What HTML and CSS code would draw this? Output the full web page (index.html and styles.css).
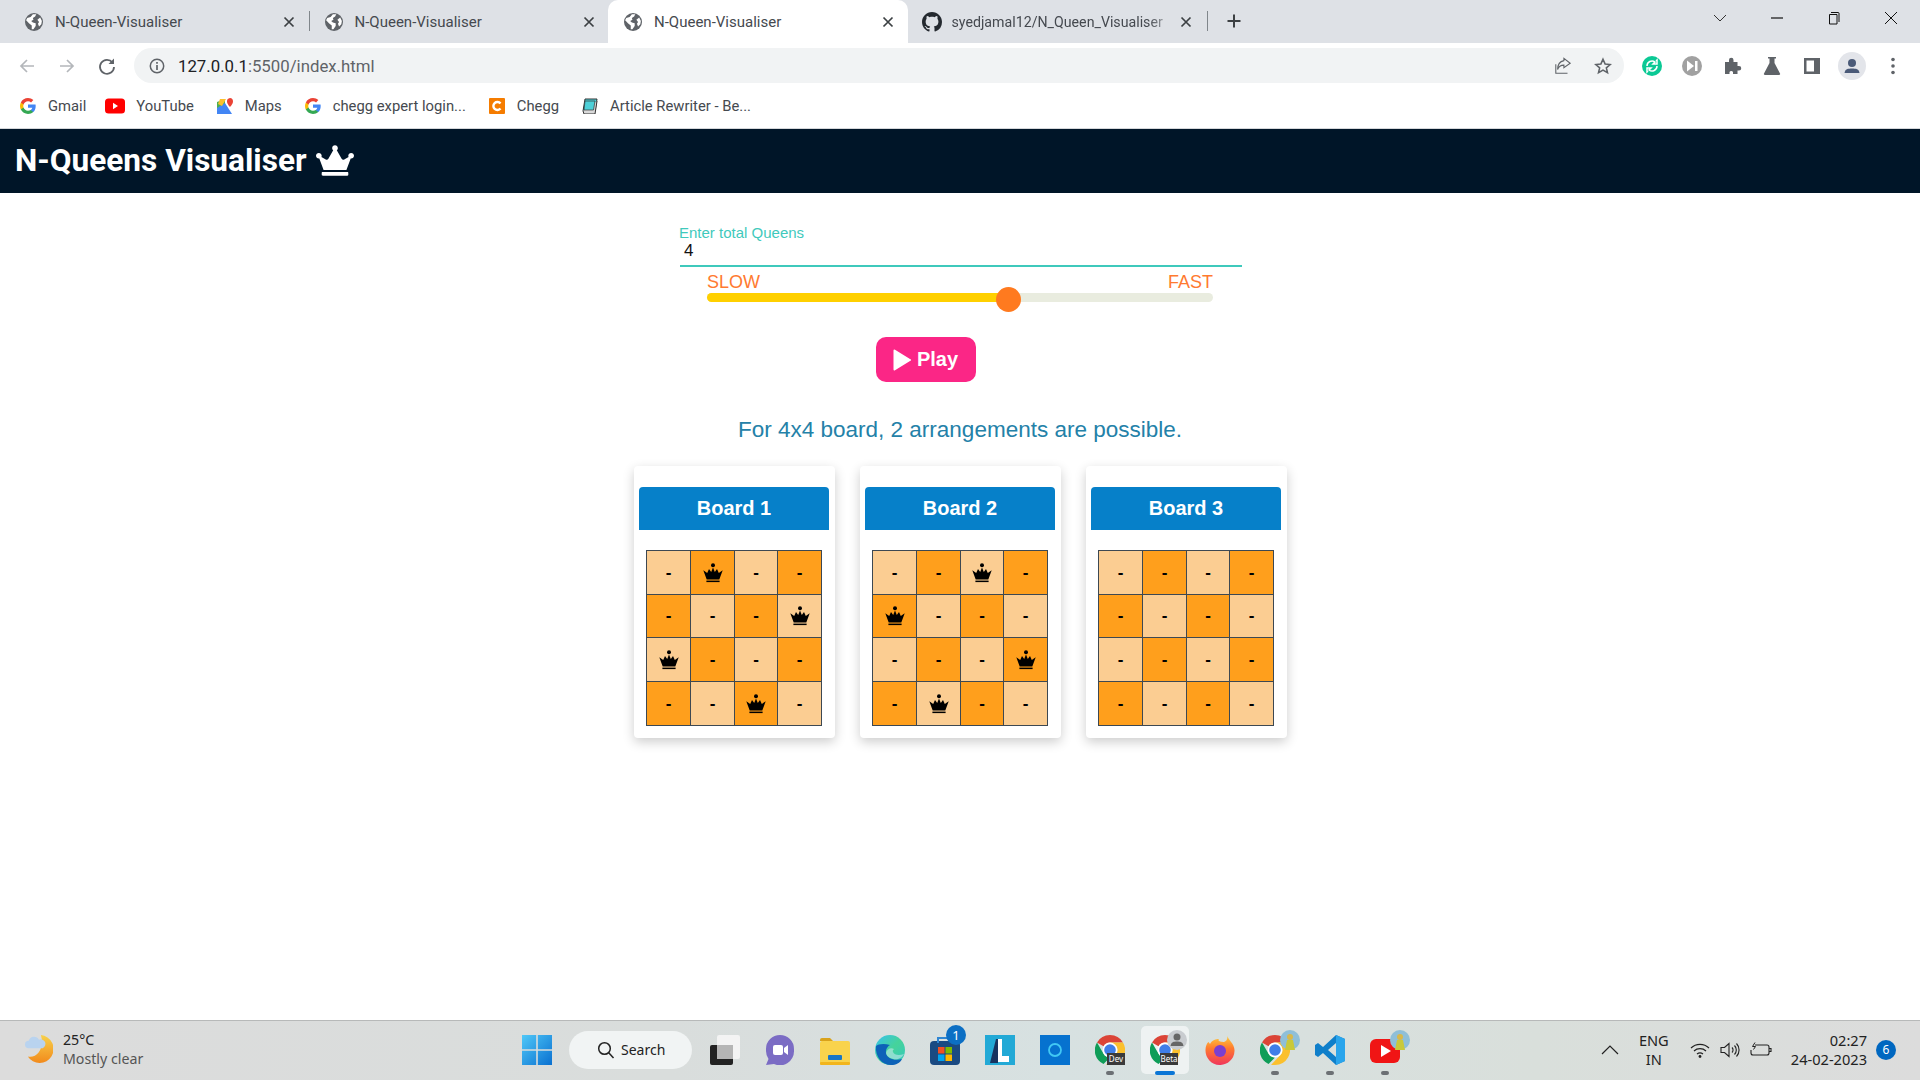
FILE: index.html
```html
<!DOCTYPE html>
<html lang="en">
<head>
<meta charset="utf-8">
<title>N-Queen-Visualiser</title>
<link rel="stylesheet" href="styles.css">
</head>
<body>
<svg class="defs" aria-hidden="true">
  <symbol id="globe" viewBox="0 0 16 16"><circle cx="8" cy="8" r="8" fill="#5f6368"/><path d="M2 4.5 5 3.5 7 1 10 1 9 3 7 4.5 7.5 6 5.5 7 7 8.5 9.5 9 9.5 11.5 7.5 14.5 6 14.5 6 11 3.5 9 1 6.5ZM11 6 13.5 4 15 7 14.5 10 12.5 12 11.5 9.5 12.5 8Z" fill="#fff"/></symbol>
  <symbol id="close" viewBox="0 0 12 12"><path d="M1.5 1.5 10.5 10.5M10.5 1.5 1.5 10.5" stroke="#3c4043" stroke-width="1.7" fill="none"/></symbol>
  <symbol id="gg" viewBox="0 0 18 18"><path d="M17.64 9.2c0-.637-.057-1.251-.164-1.84H9v3.481h4.844c-.209 1.125-.843 2.078-1.796 2.717v2.258h2.908c1.702-1.567 2.684-3.874 2.684-6.615z" fill="#4285F4"/><path d="M9 18c2.43 0 4.467-.806 5.956-2.18l-2.908-2.259c-.806.54-1.837.86-3.048.86-2.344 0-4.328-1.584-5.036-3.711H.957v2.332C2.438 15.983 5.482 18 9 18z" fill="#34A853"/><path d="M3.964 10.71c-.18-.54-.282-1.117-.282-1.71s.102-1.17.282-1.71V4.958H.957C.347 6.173 0 7.548 0 9s.348 2.827.957 4.042l3.007-2.332z" fill="#FBBC05"/><path d="M9 3.58c1.321 0 2.508.454 3.44 1.345l2.582-2.58C13.463.891 11.426 0 9 0 5.482 0 2.438 2.017.957 4.958L3.964 7.29C4.672 5.163 6.656 3.58 9 3.58z" fill="#EA4335"/></symbol>
  <symbol id="queen" viewBox="0 0 20 20"><circle cx="10" cy="2.3" r="2"/><path d="M.3 7.2 3.7 16.5H16.3L19.7 7.2 15.8 10 14 6 11.8 9 10 4.5 8.2 9 6 6 4.2 10Z"/><rect x="3.4" y="17.6" width="13.2" height="1.5"/></symbol>
  <symbol id="crown" viewBox="0 0 640 512"><path d="M528 448H112c-8.8 0-16 7.2-16 16v32c0 8.8 7.2 16 16 16h416c8.800 0 16-7.200 16-16v-32c0-8.800-7.200-16-16-16zm64-320c-26.500 0-48 21.500-48 48 0 7.100 1.600 13.700 4.400 19.800L476 239.200c-15.400 9.200-35.300 4-44.200-11.600L350.300 85C361 76.200 368 63 368 48c0-26.500-21.500-48-48-48s-48 21.500-48 48c0 15 7 28.200 17.700 37l-81.500 142.600c-8.900 15.600-28.900 20.800-44.200 11.600l-72.300-43.400c2.700-6 4.400-12.700 4.400-19.800 0-26.500-21.500-48-48-48S0 149.500 0 176s21.500 48 48 48c2.600 0 5.200-.4 7.700-.8L128 416h384l72.300-192.800c2.500.4 5.100.8 7.700.8 26.500 0 48-21.500 48-48s-21.500-48-48-48z" fill="#fff"/></symbol>
  <symbol id="chrome" viewBox="0 0 30 30"><path d="M15 0A15 15 0 0 1 28 7.500H15A7.500 7.500 0 0 0 8.500 11.250L2 7.500A15 15 0 0 1 15 0Z" fill="#db4437"/><path d="M2 7.500 8.500 18.750A7.500 7.500 0 0 0 15 22.500L8.500 29A15 15 0 0 1 2 7.500Z" fill="#0f9d58"/><path d="M28 7.500A15 15 0 0 1 15 30H11L21.500 18.750A7.500 7.500 0 0 0 21.500 11.250L15 7.500Z" fill="#fbc02d"/><circle cx="15" cy="15" r="7.400" fill="#fff"/><circle cx="15" cy="15" r="5.800" fill="#3f7ee8"/></symbol>
</svg>

<div class="tabstrip">
  <div class="tab tab-sep"><svg class="favicon"><use href="#globe"/></svg><span class="tab-title">N-Queen-Visualiser</span><svg class="tab-x"><use href="#close"/></svg></div>
  <div class="tab"><svg class="favicon"><use href="#globe"/></svg><span class="tab-title">N-Queen-Visualiser</span><svg class="tab-x"><use href="#close"/></svg></div>
  <div class="tab tab-active"><svg class="favicon"><use href="#globe"/></svg><span class="tab-title">N-Queen-Visualiser</span><svg class="tab-x"><use href="#close"/></svg></div>
  <div class="tab tab-sep"><svg class="favicon favicon-gh" viewBox="0 0 16 16"><path fill="#24292f" d="M8 0C3.580 0 0 3.580 0 8c0 3.540 2.290 6.530 5.470 7.590.4.070.55-.17.55-.38 0-.19-.01-.82-.01-1.490-2.010.37-2.530-.49-2.690-.94-.09-.23-.48-.94-.82-1.130-.28-.15-.68-.52-.01-.53.63-.01 1.080.58 1.230.82.72 1.210 1.870.87 2.330.66.070-.52.28-.87.51-1.070-1.780-.2-3.640-.89-3.640-3.950 0-.87.31-1.590.82-2.150-.08-.2-.36-1.020.08-2.120 0 0 .67-.21 2.200.82.64-.18 1.320-.27 2-.27.68 0 1.360.09 2 .27 1.530-1.040 2.200-.82 2.200-.82.44 1.100.16 1.920.08 2.120.51.56.82 1.270.82 2.150 0 3.070-1.870 3.750-3.650 3.950.29.25.54.73.54 1.480 0 1.070-.01 1.930-.01 2.200 0 .21.15.46.55.38A8.013 8.013 0 0016 8c0-4.420-3.580-8-8-8z"/></svg><span class="tab-title tab-fade">syedjamal12/N_Queen_Visualiser</span><svg class="tab-x"><use href="#close"/></svg></div>
  <svg class="newtab" viewBox="0 0 16 16"><path d="M8 1.500V14.500M1.500 8H14.500" stroke="#3c4043" stroke-width="2" fill="none"/></svg>
  <div class="winctl">
    <svg class="wc" viewBox="0 0 16 16"><path d="M2 5 8 11 14 5" stroke="#333" fill="none"/></svg>
    <svg class="wc" viewBox="0 0 16 16"><path d="M2 8H14" stroke="#111" stroke-width="1.200" fill="none"/></svg>
    <svg class="wc" viewBox="0 0 16 16"><path d="M3.500 4.500H11V14H3.500ZM5 2.500H12.500A1 1 0 0 1 13 3V12" stroke="#111" fill="none"/></svg>
    <svg class="wc" viewBox="0 0 16 16"><path d="M2 2 14 14M14 2 2 14" stroke="#111" fill="none"/></svg>
  </div>
</div>

<div class="toolbar">
  <svg class="tool" viewBox="0 0 20 20"><path d="M17 10H4M10 4 4 10 10 16" stroke="#b4b7bb" stroke-width="1.700" fill="none"/></svg>
  <svg class="tool" viewBox="0 0 20 20"><path d="M3 10H16M10 4 16 10 10 16" stroke="#b4b7bb" stroke-width="1.700" fill="none"/></svg>
  <svg class="tool" viewBox="0 0 20 20"><path d="M15.500 6.500A7 7 0 1 0 17 11" stroke="#5f6368" stroke-width="1.800" fill="none"/><path d="M17 2.500V8H11.500Z" fill="#5f6368"/></svg>
  <div class="omnibox">
    <svg class="info" viewBox="0 0 16 16"><circle cx="8" cy="8" r="6.700" fill="none" stroke="#5f6368" stroke-width="1.500"/><path d="M8 7V12M8 4V5.700" stroke="#5f6368" stroke-width="1.700"/></svg>
    <span class="url"><span class="url-host">127.0.0.1</span>:5500/index.html</span>
    <svg class="omni-act" viewBox="0 0 20 20"><path d="M11 4V1.500L18 7 11 12V9C7 9 5 11 4 14 4 9 6 5 11 4ZM2 8V18H15" stroke="#5f6368" stroke-width="1.200" fill="none"/></svg>
    <svg class="omni-act" viewBox="0 0 20 20"><path d="M10 2.500 12.300 7.700 18 8.300 13.700 12 15 17.500 10 14.600 5 17.500 6.300 12 2 8.300 7.700 7.700Z" stroke="#5f6368" stroke-width="1.700" fill="none"/></svg>
  </div>
  <div class="ext-row">
    <svg class="tool" viewBox="0 0 20 20"><circle cx="10" cy="10" r="10" fill="#0bc995"/><path d="M5 10A5 5 0 0 1 13 6L11 8H15V4L14 5M15 10A5 5 0 0 1 7 14L9 12H5V16L6 15" stroke="#fff" stroke-width="1.500" fill="none"/></svg>
    <svg class="tool" viewBox="0 0 20 20"><circle cx="10" cy="10" r="10" fill="#a1a1a1"/><path d="M5 4.500 12 10 5 15.500Z" fill="#fff"/><rect x="13" y="5" width="2.500" height="10" fill="#fff"/></svg>
    <svg class="tool" viewBox="0 0 20 20"><path d="M3 6H7V4A2.200 2.200 0 0 1 11.500 4V6H15.500V10H17A2.200 2.200 0 0 1 17 14.500H15.500V18H11V16A2 2 0 0 0 7.500 16V18H3Z" fill="#5f6368"/></svg>
    <svg class="tool" viewBox="0 0 20 20"><path d="M6 1H14V2.500H12.500V7L18 17.500A1 1 0 0 1 17 19H3A1 1 0 0 1 2 17.500L7.500 7V2.500H6Z" fill="#5f6368"/></svg>
    <svg class="tool" viewBox="0 0 20 20"><path d="M2 2H18V18H2ZM4.500 4.500V15.500H12V4.500Z" fill="#5f6368" fill-rule="evenodd"/></svg>
    <svg class="tool tool-avatar" viewBox="0 0 28 28"><circle cx="14" cy="14" r="14" fill="#e3e5ea"/><circle cx="14" cy="11" r="4" fill="#4a5a78"/><path d="M6.500 21C7 17 10 16.500 14 16.500S21 17 21.500 21Z" fill="#4a5a78"/></svg>
    <svg class="tool" viewBox="0 0 20 20"><circle cx="10" cy="3.500" r="1.800" fill="#5f6368"/><circle cx="10" cy="10" r="1.800" fill="#5f6368"/><circle cx="10" cy="16.500" r="1.800" fill="#5f6368"/></svg>
  </div>
</div>

<div class="bookmarks">
  <div class="bm"><svg class="bm-ico"><use href="#gg"/></svg><span>Gmail</span></div>
  <div class="bm bm-tube"><svg class="bm-ico bm-yt" viewBox="0 0 20 16"><rect width="20" height="15" y=".5" rx="3.500" fill="#f00"/><path d="M8 4.700 13 8 8 11.300Z" fill="#fff"/></svg><span>YouTube</span></div>
  <div class="bm"><svg class="bm-ico" viewBox="0 0 16 16"><path d="M0 4 8 1V15L0 16Z" fill="#4caf50"/><path d="M0 10 8 5 15 16H0Z" fill="#4285f4"/><path d="M3 1 9 1 5 8 1 6Z" fill="#fbc02d"/><path d="M13 0A3.500 3.500 0 0 1 16 3.500C16 6 13 9 13 9S10 6 10 3.500A3.500 3.500 0 0 1 13 0Z" fill="#ea4335"/></svg><span>Maps</span></div>
  <div class="bm"><svg class="bm-ico"><use href="#gg"/></svg><span>chegg expert login...</span></div>
  <div class="bm"><svg class="bm-ico" viewBox="0 0 16 16"><rect width="16" height="16" rx="1" fill="#f57c00"/><path d="M11.500 5.500A4 4 0 1 0 11.500 10.500" stroke="#fff" stroke-width="2.400" fill="none"/></svg><span>Chegg</span></div>
  <div class="bm"><svg class="bm-ico" viewBox="0 0 16 16"><path d="M3 1H15L13 13H1Z" fill="#4dd0d8" stroke="#333"/><path d="M1 13 2 16H13L15 3" stroke="#333" fill="#d9d9d9"/><path d="M3 3H13L11.500 12H2Z" fill="#4dd0d8" stroke="#333" stroke-width=".7"/></svg><span>Article Rewriter - Be...</span></div>
</div>

<header class="app-header">
  <h1 class="app-title">N-Queens Visualiser</h1>
  <svg class="app-crown"><use href="#crown"/></svg>
</header>

<main class="page">
  <section class="controls">
    <label class="field-label">Enter total Queens</label>
    <div class="field-value">4</div>
    <div class="speed">
      <div class="speed-labels"><span>SLOW</span><span>FAST</span></div>
      <div class="slider"><div class="slider-fill"></div><div class="slider-thumb"></div></div>
    </div>
    <button class="play"><svg class="play-ico" viewBox="0 0 18 22"><path d="M1 1.500V20.500A1 1 0 0 0 2.500 21.300L17.500 12A1 1 0 0 0 17.500 10L2.500.7A1 1 0 0 0 1 1.500Z" fill="#fff"/></svg>Play</button>
  </section>
  <p class="result">For 4x4 board, 2 arrangements are possible.</p>
  <section class="boards">
    <article class="card">
      <h2 class="card-title">Board 1</h2>
      <div class="grid">
        <div class="c l">-</div><div class="c d"><svg class="q"><use href="#queen"/></svg></div><div class="c l">-</div><div class="c d">-</div>
        <div class="c d">-</div><div class="c l">-</div><div class="c d">-</div><div class="c l"><svg class="q"><use href="#queen"/></svg></div>
        <div class="c l"><svg class="q"><use href="#queen"/></svg></div><div class="c d">-</div><div class="c l">-</div><div class="c d">-</div>
        <div class="c d">-</div><div class="c l">-</div><div class="c d"><svg class="q"><use href="#queen"/></svg></div><div class="c l">-</div>
      </div>
    </article>
    <article class="card">
      <h2 class="card-title">Board 2</h2>
      <div class="grid">
        <div class="c l">-</div><div class="c d">-</div><div class="c l"><svg class="q"><use href="#queen"/></svg></div><div class="c d">-</div>
        <div class="c d"><svg class="q"><use href="#queen"/></svg></div><div class="c l">-</div><div class="c d">-</div><div class="c l">-</div>
        <div class="c l">-</div><div class="c d">-</div><div class="c l">-</div><div class="c d"><svg class="q"><use href="#queen"/></svg></div>
        <div class="c d">-</div><div class="c l"><svg class="q"><use href="#queen"/></svg></div><div class="c d">-</div><div class="c l">-</div>
      </div>
    </article>
    <article class="card">
      <h2 class="card-title">Board 3</h2>
      <div class="grid">
        <div class="c l">-</div><div class="c d">-</div><div class="c l">-</div><div class="c d">-</div>
        <div class="c d">-</div><div class="c l">-</div><div class="c d">-</div><div class="c l">-</div>
        <div class="c l">-</div><div class="c d">-</div><div class="c l">-</div><div class="c d">-</div>
        <div class="c d">-</div><div class="c l">-</div><div class="c d">-</div><div class="c l">-</div>
      </div>
    </article>
  </section>
</main>

<footer class="taskbar">
  <div class="weather">
    <svg class="weather-ico" viewBox="0 0 30 34"><defs><linearGradient id="moon" x1="0" y1="0" x2="0" y2="1"><stop offset="0" stop-color="#f7d14b"/><stop offset="1" stop-color="#f28a1c"/></linearGradient></defs><path d="M17 1A15 15 0 1 1 3 24C14 26 21 14 17 1Z" fill="url(#moon)"/><path d="M4 15A4 4 0 0 1 4 7 6 6 0 0 1 15 6 4.500 4.500 0 0 1 19 15Z" fill="#b9d3ef"/></svg>
    <div class="weather-text"><div class="w-temp">25°C</div><div class="w-sky">Mostly clear</div></div>
  </div>
  <svg class="win" viewBox="0 0 30 30"><defs><linearGradient id="wg" x1="0" y1="0" x2="1" y2="1"><stop offset="0" stop-color="#4fc8f8"/><stop offset="1" stop-color="#0a70d0"/></linearGradient></defs><path d="M0 0H14.200V14.200H0ZM15.800 0H30V14.200H15.800ZM0 15.800H14.200V30H0ZM15.800 15.800H30V30H15.800Z" fill="url(#wg)"/></svg>
  <div class="search"><svg class="search-ico" viewBox="0 0 18 18"><circle cx="7.500" cy="7.500" r="5.800" fill="none" stroke="#222" stroke-width="1.500"/><path d="M11.500 11.500 16.500 17" stroke="#222" stroke-width="1.500"/></svg><span>Search</span></div>
  <div class="apps">
    <div class="app"><svg class="app-ico" viewBox="0 0 30 30"><rect x="0" y="10" width="23" height="20" rx="2" fill="#222"/><rect x="7" y="0" width="23" height="24" rx="2" fill="#f3f3f3"/><rect x="7" y="10" width="16" height="14" fill="#b5b5b5"/></svg></div>
    <div class="app"><svg class="app-ico" viewBox="0 0 30 30"><path d="M15 0A14 14 0 0 1 29 14V16A14 14 0 0 1 9 29L1 30 3.500 24A14 14 0 0 1 1 16V14A14 14 0 0 1 15 0Z" fill="#7b6cc4"/><rect x="8" y="10" width="10" height="10" rx="2" fill="#fff"/><path d="M19 13 23 10V20L19 17Z" fill="#fff"/></svg></div>
    <div class="app"><svg class="app-ico" viewBox="0 0 30 30"><path d="M0 5A2 2 0 0 1 2 3H10L13 6H0Z" fill="#d9a21b"/><rect y="6" width="30" height="23" rx="2" fill="#f9d34c"/><rect x="8" y="20" width="14" height="5" rx="1" fill="#1976c5"/><rect y="27" width="30" height="3" rx="1" fill="#f2b51c"/></svg></div>
    <div class="app"><svg class="app-ico" viewBox="0 0 30 30"><defs><linearGradient id="eg" x1="0" y1="0" x2="1" y2="1"><stop offset="0" stop-color="#35c1f1"/><stop offset=".5" stop-color="#46d39a"/><stop offset="1" stop-color="#33c8c0"/></linearGradient></defs><circle cx="15" cy="15" r="15" fill="url(#eg)"/><path d="M1 11C0 22 7 30 16 30 21 30 25 28 27 24 20 26 12 24 11 18 10.500 14 13 11 15 10 9 8 3 9 1 11Z" fill="#0d62b8"/><path d="M11 18C12 23 19 25 23 24 26 23 28 21 29 19 24 21 19 20 18 17 17.500 15.500 18 15 19 14 16 12 12 14 11 18Z" fill="#cfe9f2" opacity=".55"/></svg></div>
    <div class="app"><svg class="app-ico" viewBox="0 0 30 30"><rect y="6" width="30" height="24" rx="4" fill="#1a4a82"/><path d="M8 8V3H22V8" stroke="#2f86d2" stroke-width="2" fill="none"/><rect x="8" y="12" width="6.500" height="6.500" fill="#f25022"/><rect x="15.500" y="12" width="6.500" height="6.500" fill="#7fba00"/><rect x="8" y="19.500" width="6.500" height="6.500" fill="#00a4ef"/><rect x="15.500" y="19.500" width="6.500" height="6.500" fill="#ffb900"/></svg><span class="app-badge">1</span></div>
    <div class="app"><svg class="app-ico" viewBox="0 0 30 30"><rect width="30" height="30" fill="#22a9d6"/><path d="M5 28 11 4H13V28Z" fill="#17335f"/><path d="M13 4H17V21H24V27H13Z" fill="#fff"/></svg></div>
    <div class="app"><svg class="app-ico" viewBox="0 0 30 30"><rect width="30" height="30" fill="#0672cf"/><circle cx="15" cy="15" r="6" fill="none" stroke="#41c8f4" stroke-width="1.800"/></svg></div>
    <div class="app has-dot"><svg class="app-ico" viewBox="0 0 30 30"><use href="#chrome"/><rect x="12" y="18" width="18" height="12" fill="#3a3a3a"/><text class="tag" x="21" y="27">Dev</text></svg></div>
    <div class="app app-on"><svg class="app-ico" viewBox="0 0 30 30"><use href="#chrome"/><rect x="10" y="18" width="18" height="12" fill="#3a3a3a"/><text class="tag" x="19" y="27">Beta</text></svg><svg class="app-corner" viewBox="0 0 20 20"><circle cx="10" cy="10" r="10" fill="#c9ccd0"/><circle cx="10" cy="7" r="3.500" fill="#666"/><path d="M3.500 16C4 12 7 11.500 10 11.500S16 12 16.500 16Z" fill="#666"/></svg></div>
    <div class="app"><svg class="app-ico" viewBox="0 0 30 30"><defs><linearGradient id="ff" x1="0" y1="0" x2="0" y2="1"><stop offset="0" stop-color="#ffd23d"/><stop offset=".45" stop-color="#ff7a2f"/><stop offset="1" stop-color="#f0365c"/></linearGradient></defs><path d="M22 0C23 5 30 9 29.500 16A14.500 14.500 0 0 1 .5 15C.5 11 2 8 3.500 7L5 9C7 5 11 4 14 4 12 6 16 7 19 7 22 6 23 3 22 0Z" fill="url(#ff)"/><circle cx="15" cy="16" r="6" fill="#7b3fd0"/></svg></div>
    <div class="app has-dot"><svg class="app-ico" viewBox="0 0 30 30"><use href="#chrome"/></svg><svg class="app-corner" viewBox="0 0 20 20"><circle cx="10" cy="10" r="10" fill="#8fbfd8"/><path d="M5 20 7 10H13L15 20Z" fill="#c9c93a"/><circle cx="10" cy="7" r="3" fill="#d8b84a"/></svg></div>
    <div class="app has-dot"><svg class="app-ico" viewBox="0 0 30 30"><path d="M21 0 30 4V26L21 30 8 18 3 22 0 20V10L3 8 8 12ZM21 8 13 15 21 22Z" fill="#0f7fca" fill-rule="evenodd"/><path d="M21 0 30 4V26L21 30Z" fill="#2aa5ec"/></svg></div>
    <div class="app has-dot"><svg class="app-ico" viewBox="0 0 30 30"><rect y="4" width="30" height="24" rx="6" fill="#f01515"/><path d="M11 10 21 16 11 22Z" fill="#fff"/></svg><svg class="app-corner" viewBox="0 0 20 20"><circle cx="10" cy="10" r="10" fill="#8fbfd8"/><path d="M5 20 7 10H13L15 20Z" fill="#c9c93a"/><circle cx="10" cy="7" r="3" fill="#d8b84a"/></svg></div>
  </div>
  <div class="tray">
    <svg class="tray-chev" viewBox="0 0 18 10"><path d="M1 9 9 1 17 9" stroke="#222" stroke-width="1.200" fill="none"/></svg>
    <div class="tray-lang"><div>ENG</div><div>IN</div></div>
    <svg class="tray-wifi" viewBox="0 0 20 16"><path d="M1 6A13 13 0 0 1 19 6M4 9A9 9 0 0 1 16 9M7 12A5 5 0 0 1 13 12" stroke="#222" stroke-width="1.200" fill="none"/><circle cx="10" cy="14.500" r="1.400" fill="#222"/></svg>
    <svg class="tray-vol" viewBox="0 0 20 16"><path d="M1 5.500H4.500L9 1.500V14.500L4.500 10.500H1ZM12 5.500A3.500 3.500 0 0 1 12 10.500M14.500 3.500A6.500 6.500 0 0 1 14.500 12.500M16.500 1.500A9.500 9.500 0 0 1 16.500 14.500" stroke="#222" stroke-width="1.100" fill="none"/></svg>
    <svg class="tray-bat" viewBox="0 0 22 16"><path d="M5 3H17A2 2 0 0 1 19 5V11A2 2 0 0 1 17 13H3A2 2 0 0 1 1 11V8M19 6.500H21V9.500H19" stroke="#222" stroke-width="1.100" fill="none"/><path d="M5 .5 2.500 4.500H5.500L3.500 7.500" stroke="#222" fill="none"/></svg>
    <div class="tray-clock"><div>02:27</div><div>24-02-2023</div></div>
    <span class="notif">6</span>
  </div>
</footer>
</body>
</html>
```

FILE: styles.css
```css
* { box-sizing: border-box; }
html, body { margin: 0; padding: 0; }
body {
  width: 1920px;
  height: 1080px;
  overflow: hidden;
  display: flex;
  flex-direction: column;
  background: #fff;
  font-family: "Liberation Sans", Arial, sans-serif;
}
svg { display: block; flex: none; }
.defs { display: none; }

/* tab strip */
.tabstrip {
  height: 43px;
  flex: none;
  background: #dee1e6;
  display: flex;
  align-items: stretch;
  padding-left: 9px;
  font-family: Roboto, sans-serif;
}
.tab {
  width: 299.5px;
  flex: none;
  position: relative;
  display: flex;
  align-items: center;
  padding-left: 16px;
  color: #45494f;
  font-size: 15px;
}
.tab-sep::before {
  content: "";
  position: absolute;
  right: -1px;
  top: 11px;
  height: 20px;
  width: 1px;
  background: #80868b;
}
.tab-active { background: #fff; border-radius: 10px 10px 0 0; }
.favicon { width: 18px; height: 18px; margin-right: 12px; }
.favicon-gh { width: 20px; height: 20px; margin-left: -2px; margin-right: 10px; }
.tab-title { width: 218px; white-space: nowrap; overflow: hidden; }
.tab-fade {
  font-size: 14.2px;
  -webkit-mask-image: linear-gradient(90deg, #000 90%, rgba(0, 0, 0, .25) 100%);
  mask-image: linear-gradient(90deg, #000 90%, rgba(0, 0, 0, .25) 100%);
}
.tab-x { width: 12px; height: 12px; margin-left: 10px; }
.newtab { width: 16px; height: 16px; margin: 13px 0 0 19px; }
.winctl { margin-left: auto; display: flex; align-items: flex-start; padding: 10px 21px 0 0; gap: 41px; }
.wc { width: 16px; height: 16px; }

/* toolbar */
.toolbar {
  height: 45px;
  flex: none;
  display: flex;
  align-items: center;
  padding-left: 7px;
  background: #fff;
}
.tool { width: 20px; height: 20px; margin: 0 10px; }
.tool-avatar { width: 28px; height: 28px; margin: 0 7px 0 6px; }
.omnibox {
  width: 1490px;
  height: 35px;
  margin-left: 7px;
  background: #f1f3f4;
  border-radius: 18px;
  display: flex;
  align-items: center;
  padding: 0 1px 0 15px;
  flex: none;
}
.info { width: 16px; height: 16px; margin-right: 13px; }
.url { font-family: Roboto, sans-serif; font-size: 16.8px; color: #5f6368; flex: 1; }
.url-host { color: #202124; }
.omni-act { width: 18px; height: 18px; margin: 0 11px; }
.ext-row { display: flex; align-items: center; margin-left: 8px; }

/* bookmarks */
.bookmarks {
  height: 41px;
  flex: none;
  display: flex;
  align-items: center;
  gap: 23px;
  padding: 0 0 4px 20px;
  background: #fff;
  border-bottom: 1px solid #d5d7da;
  font-family: Roboto, sans-serif;
  font-size: 14.8px;
  color: #45494f;
}
.bm { display: flex; align-items: center; gap: 12px; white-space: nowrap; }
.bm-tube { margin-left: -4px; gap: 11px; }
.bm-ico { width: 16px; height: 16px; }
.bm-yt { width: 20px; }

/* app header */
.app-header {
  height: 64px;
  flex: none;
  background: #001528;
  display: flex;
  align-items: center;
  padding: 0 0 1px 15px;
  color: #fff;
}
.app-title { margin: 0; font-family: Roboto, sans-serif; font-size: 31.6px; font-weight: 700; line-height: 1.2; }
.app-crown { width: 38px; height: 31px; margin-left: 9px; }

/* page */
.page { flex: 1; display: flex; flex-direction: column; align-items: center; }
.controls { width: 562px; margin-left: 2px; padding-top: 31px; display: flex; flex-direction: column; }
.field-label { font-size: 15px; line-height: 18px; margin-left: -1px; color: #3fc9bc; }
.field-value {
  height: 25px;
  line-height: 17px;
  padding-left: 4px;
  font-size: 17px;
  color: #111;
  border-bottom: 2px solid #3fc9bc;
}
.speed { padding: 5px 29px 0 27px; }
.speed-labels { display: flex; justify-content: space-between; font-size: 18px; line-height: 20px; color: #ff7a30; }
.slider { height: 9px; background: #e9ecdf; border-radius: 5px; position: relative; margin-top: 1px; }
.slider-fill { width: 59.500%; height: 100%; background: #ffd000; border-radius: 5px 0 0 5px; }
.slider-thumb {
  position: absolute;
  left: 59.500%;
  top: -6px;
  width: 25px;
  height: 25px;
  margin-left: -12px;
  border-radius: 50%;
  background: #ff7a1f;
}
.play {
  align-self: flex-start;
  margin: 35px 0 0 196px;
  width: 100px;
  height: 45px;
  border: 0;
  border-radius: 10px;
  background: #fb2686;
  color: #fff;
  font-family: inherit;
  font-weight: 700;
  font-size: 20px;
  display: flex;
  align-items: center;
  justify-content: center;
  gap: 6px;
  padding: 0 2px 0 0;
}
.play-ico { width: 19px; height: 22px; }
.result { margin: 35px 0 0; font-size: 22.5px; line-height: 26px; color: #2481a8; }
.boards { display: flex; gap: 25px; margin-top: 23px; margin-left: 1px; }
.card {
  width: 201px;
  height: 272px;
  padding: 21px 6px 12px 5px;
  background: #fff;
  border-radius: 4px;
  box-shadow: 0 4px 12px rgba(0, 0, 0, .2);
}
.card-title {
  margin: 0 0 20px;
  height: 43px;
  line-height: 42px;
  text-align: center;
  background: #0680c9;
  border-radius: 4px 4px 0 0;
  color: #fff;
  font-size: 20px;
  font-weight: 700;
}
.grid {
  margin-left: 7px;
  width: 176px;
  height: 176px;
  display: grid;
  grid-template-columns: 44px 44px 43px 44px;
  grid-template-rows: 44px 43px 44px 44px;
  background: #3d4852;
  border-top: 1px solid #3d4852;
  border-left: 1px solid #3d4852;
}
.c {
  display: flex;
  align-items: center;
  justify-content: center;
  border-right: 1px solid #3d4852;
  border-bottom: 1px solid #3d4852;
  font-size: 17px;
  font-weight: 700;
  color: #000;
}
.l { background: #fbcd92; }
.d { background: #ff9f1c; }
.q { width: 20px; height: 20px; fill: #000; }

/* taskbar */
.taskbar {
  height: 60px;
  flex: none;
  display: flex;
  align-items: center;
  padding-bottom: 2px;
  border-top: 1px solid #b7b9b9;
  background: linear-gradient(90deg, #dcdcdc 0%, #d9dddc 35%, #d7e1e1 55%, #d9dfdb 80%, #dcdcdc 100%);
  font-family: "Noto Sans", sans-serif;
  color: #222;
}
.weather { width: 521px; flex: none; display: flex; align-items: center; padding-left: 25px; gap: 10px; }
.weather-ico { width: 28px; height: 32px; }
.weather-text { font-size: 14.2px; line-height: 19px; }
.w-temp { margin-top: -1px; }
.w-sky { color: #555; }
.win { width: 30px; height: 30px; margin-left: 1px; }
.search {
  width: 123px;
  height: 38px;
  margin: 0 5px 0 17px;
  border-radius: 19px;
  background: #f1f4f4;
  display: flex;
  align-items: center;
  padding-left: 28px;
  gap: 6px;
  font-size: 14px;
  flex: none;
}
.search-ico { width: 18px; height: 18px; }
.apps { display: flex; align-items: center; }
.app { width: 55px; height: 48px; position: relative; display: flex; align-items: center; justify-content: center; }
.app-ico { width: 30px; height: 30px; }
.has-dot::after {
  content: "";
  position: absolute;
  left: 24px;
  bottom: -1px;
  width: 8px;
  height: 4px;
  border-radius: 2px;
  background: #6c7074;
}
.app-on { width: 48px; margin: 0 3.500px; background: #eef2f2; border-radius: 5px; }
.app-on::after {
  content: "";
  position: absolute;
  left: 14px;
  bottom: -1px;
  width: 20px;
  height: 4px;
  border-radius: 2px;
  background: #0b76d6;
}
.app-badge {
  position: absolute;
  right: 6px;
  top: -1px;
  width: 20px;
  height: 20px;
  border-radius: 50%;
  background: #0c6fc4;
  color: #fff;
  font-size: 13px;
  line-height: 20px;
  text-align: center;
}
.app-corner { position: absolute; right: 2px; top: 4px; width: 20px; height: 20px; }
.tag { fill: #fff; font-family: "Noto Sans", sans-serif; font-size: 8px; text-anchor: middle; }
.tray { margin-left: auto; display: flex; align-items: center; padding-right: 24px; font-size: 14.6px; }
.tray-chev { width: 18px; height: 10px; }
.tray-lang { width: 30px; margin-left: 20px; text-align: center; line-height: 19px; }
.tray-wifi { width: 20px; height: 16px; margin-left: 21px; }
.tray-vol { width: 20px; height: 16px; margin-left: 10px; }
.tray-bat { width: 22px; height: 16px; margin-left: 10px; }
.tray-clock { margin-left: 19px; text-align: right; line-height: 19px; white-space: nowrap; }
.notif {
  width: 20px;
  height: 20px;
  margin-left: 9px;
  border-radius: 50%;
  background: #0067c0;
  color: #fff;
  font-size: 12px;
  line-height: 20px;
  text-align: center;
}
```
